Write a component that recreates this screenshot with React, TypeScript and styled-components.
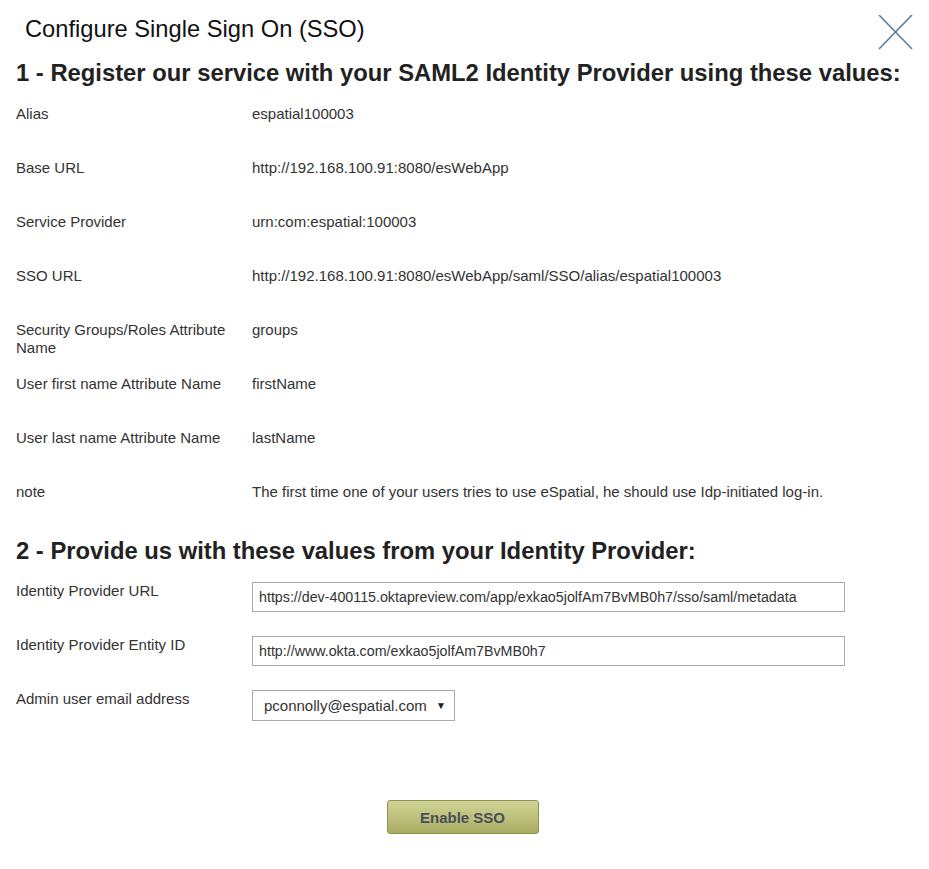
import React, { useState } from 'react'
import { styled, createGlobalStyle } from 'styled-components'

const GlobalStyle = createGlobalStyle`
  body {
    margin: 0;
    background: #ffffff;
    font-family: "Liberation Sans", Arial, sans-serif;
    color: #333333;
  }
`

const registerRows = [
    { label: 'Alias', value: 'espatial100003' },
    { label: 'Base URL', value: 'http://192.168.100.91:8080/esWebApp' },
    { label: 'Service Provider', value: 'urn:com:espatial:100003' },
    { label: 'SSO URL', value: 'http://192.168.100.91:8080/esWebApp/saml/SSO/alias/espatial100003' },
    { label: 'Security Groups/Roles Attribute Name', value: 'groups' },
    { label: 'User first name Attribute Name', value: 'firstName' },
    { label: 'User last name Attribute Name', value: 'lastName' },
    { label: 'note', value: 'The first time one of your users tries to use eSpatial, he should use Idp-initiated log-in.' },
]

const App: React.FC = () => {
    const [url, setUrl] = useState('https://dev-400115.oktapreview.com/app/exkao5jolfAm7BvMB0h7/sso/saml/metadata')
    const [entity, setEntity] = useState('http://www.okta.com/exkao5jolfAm7BvMB0h7')

    return (
        <Dialog>
            <GlobalStyle />
            <Header>
                <Title>Configure Single Sign On (SSO)</Title>
                <Close aria-label="close">
                    <svg width="35" height="35" viewBox="0 0 35 35">
                        <path d="M1 0 L34 34 M34 0 L1 34" stroke="#5f7d99" strokeWidth="1.6" fill="none" />
                    </svg>
                </Close>
            </Header>

            <SectionTitle>1 - Register our service with your SAML2 Identity Provider using these values:</SectionTitle>
            <Table top="18px">
                {registerRows.map((r) => (
                    <Row key={r.label}>
                        <Label>{r.label}</Label>
                        <Value>{r.value}</Value>
                    </Row>
                ))}
            </Table>

            <SectionTitle>2 - Provide us with these values from your Identity Provider:</SectionTitle>
            <Table top="17px">
                <Row>
                    <Label>Identity Provider URL</Label>
                    <Input value={url} onChange={(e) => setUrl(e.target.value)} />
                </Row>
                <Row>
                    <Label>Identity Provider Entity ID</Label>
                    <Input value={entity} onChange={(e) => setEntity(e.target.value)} />
                </Row>
                <Row>
                    <Label>Admin user email address</Label>
                    <SelectBox>
                        <span>pconnolly@espatial.com</span>
                        <Arrow>▼</Arrow>
                    </SelectBox>
                </Row>
            </Table>

            <Footer>
                <Button>Enable SSO</Button>
            </Footer>
        </Dialog>
    )
}

export default App

const Dialog = styled.div`
width: 929px;
height: 869px;
box-sizing: border-box;
padding: 0 16px;
`

const Header = styled.div`
display: flex;
justify-content: space-between;
align-items: flex-start;
height: 51px;
`

const Title = styled.div`
margin: 15px 0 0 9px;
font-size: 23.7px;
line-height: 28px;
font-weight: normal;
color: #111;
`

const Close = styled.div`
margin-top: 15px;
width: 35px;
height: 35px;
cursor: pointer;
`

const SectionTitle = styled.h2`
margin: 8px 0 0 0;
font-size: 23.8px;
line-height: 28px;
font-weight: bold;
color: #222;
`

const Table = styled.div<{ top?: string }>`
display: flex;
flex-direction: column;
margin-top: ${({ top }) => top || '0'};
margin-bottom: -8px;
`

const Row = styled.div`
display: grid;
grid-template-columns: 236px 1fr;
height: 54px;
font-size: 15px;
line-height: 18px;
`

const Label = styled.div`
padding-right: 10px;
`

const Value = styled.div``

const Input = styled.input`
box-sizing: border-box;
width: 593px;
height: 30px;
border: 1px solid #aaaaaa;
padding: 0 6px;
font-family: "Liberation Sans", Arial, sans-serif;
font-size: 14.25px;
color: #333;
outline: none;
`

const SelectBox = styled.div`
box-sizing: border-box;
width: 203px;
height: 31px;
border: 1px solid #aaaaaa;
display: flex;
align-items: center;
justify-content: space-between;
padding: 0 8px 0 11px;
font-size: 15px;
color: #333;
`

const Arrow = styled.span`
font-size: 10px;
color: #222;
`

const Footer = styled.div`
display: flex;
justify-content: center;
margin-top: 64px;
padding-right: 4px;
`

const Button = styled.button`
width: 152px;
height: 34px;
border: 1px solid #8e934f;
border-radius: 3px;
background: linear-gradient(#d1d496, #a9ad63);
font-family: "Liberation Sans", Arial, sans-serif;
font-size: 15px;
font-weight: bold;
color: #4a4e58;
cursor: pointer;
`
